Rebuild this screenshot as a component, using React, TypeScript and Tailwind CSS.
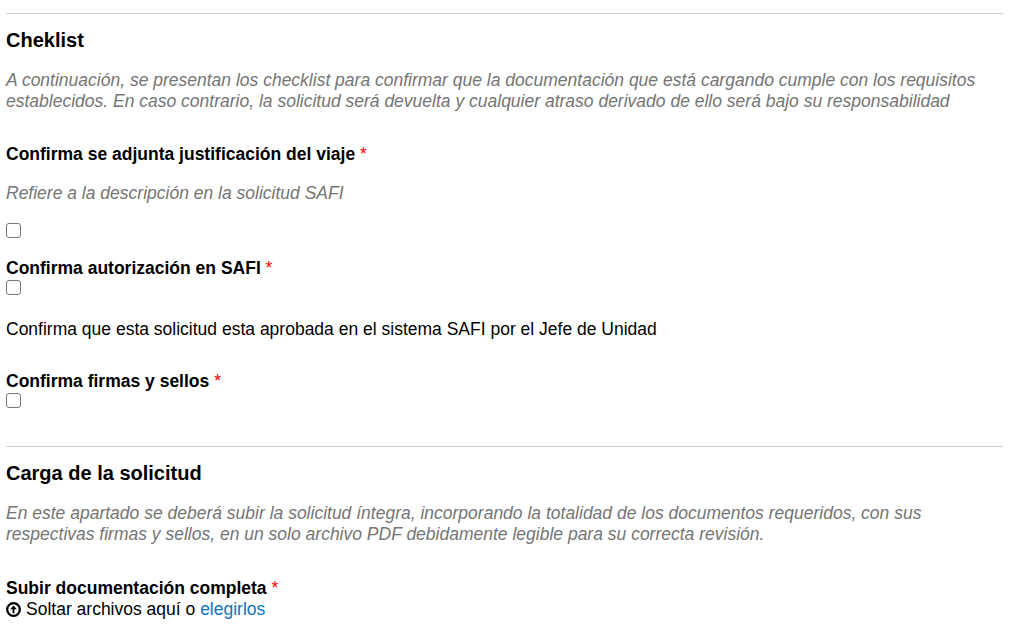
export default function App() {
  const Req = () => <span className="text-[#f00] font-normal"> *</span>
  const Box = () => (
    <div className="h-[17px] flex items-center">
      <input type="checkbox" className="w-[15px] h-[15px] appearance-none bg-white border border-[#767676] rounded-[3px]" />
    </div>
  )
  return (
    <div className="font-['Liberation_Sans',Arial,sans-serif] text-black text-[17.5px] leading-[21px] w-[1027px] h-[643px] overflow-hidden bg-white pl-[6px] pr-[24px] pt-[13px]">
      <hr className="border-t border-[#d0d0d0]" />
      <h2 className="font-bold text-[20px] leading-[24px] mt-[14px]">Cheklist</h2>
      <p className="italic text-[#757575] mt-[18px]">
        A continuación, se presentan los checklist para confirmar que la documentación que está cargando cumple con los requisitos establecidos. En caso contrario, la solicitud será devuelta y cualquier atraso derivado de ello será bajo su responsabilidad
      </p>
      <p className="font-bold mt-[32px]">Confirma se adjunta justificación del viaje<Req /></p>
      <p className="italic text-[#757575] mt-[18px]">Refiere a la descripción en la solicitud SAFI</p>
      <div className="mt-[18px]"><Box /></div>
      <p className="font-bold mt-[19px]">Confirma autorización en SAFI<Req /></p>
      <Box />
      <p className="mt-[23px]">Confirma que esta solicitud esta aprobada en el sistema SAFI por el Jefe de Unidad</p>
      <p className="font-bold mt-[31px]">Confirma firmas y sellos<Req /></p>
      <Box />
      <hr className="border-t border-[#d0d0d0] mt-[37px]" />
      <h2 className="font-bold text-[20px] leading-[24px] mt-[14px]">Carga de la solicitud</h2>
      <p className="italic text-[#757575] mt-[18px]">
        En este apartado se deberá subir la solicitud íntegra, incorporando la totalidad de los documentos requeridos, con sus respectivas firmas y sellos, en un solo archivo PDF debidamente legible para su correcta revisión.
      </p>
      <p className="font-bold mt-[33px]">Subir documentación completa<Req /></p>
      <p className="flex items-center">
        <svg viewBox="0 0 16 16" className="w-[15px] h-[15px] mr-[5px]">
          <circle cx="8" cy="8" r="6.75" fill="none" stroke="#000" strokeWidth="2.4" />
          <path d="M8 12V6.5" fill="none" stroke="#000" strokeWidth="2" />
          <path d="M8 3.8l3.6 4h-7.2z" fill="#000" />
        </svg>
        Soltar archivos aquí o&nbsp;<span className="text-[#0f74bc]">elegirlos</span>
      </p>
    </div>
  )
}
